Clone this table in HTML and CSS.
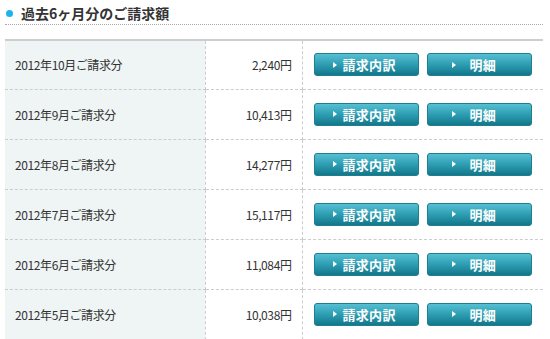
FILE: index.html
```html
<!DOCTYPE html>
<html lang="ja">
<head>
<meta charset="utf-8">
<link rel="stylesheet" href="styles.css">
</head>
<body>
<div class="wrap">
  <h2 class="title"><span class="dot"></span>過去6ヶ月分のご請求額</h2>
  <table class="bills">
    <tr><td class="month">2012年10月ご請求分</td><td class="amount">2,240円</td><td class="actions"><a class="btn"><span class="arr"></span>請求内訳</a><a class="btn btn2"><span class="arr"></span>明細</a></td></tr>
    <tr><td class="month">2012年9月ご請求分</td><td class="amount">10,413円</td><td class="actions"><a class="btn"><span class="arr"></span>請求内訳</a><a class="btn btn2"><span class="arr"></span>明細</a></td></tr>
    <tr><td class="month">2012年8月ご請求分</td><td class="amount">14,277円</td><td class="actions"><a class="btn"><span class="arr"></span>請求内訳</a><a class="btn btn2"><span class="arr"></span>明細</a></td></tr>
    <tr><td class="month">2012年7月ご請求分</td><td class="amount">15,117円</td><td class="actions"><a class="btn"><span class="arr"></span>請求内訳</a><a class="btn btn2"><span class="arr"></span>明細</a></td></tr>
    <tr><td class="month">2012年6月ご請求分</td><td class="amount">11,084円</td><td class="actions"><a class="btn"><span class="arr"></span>請求内訳</a><a class="btn btn2"><span class="arr"></span>明細</a></td></tr>
    <tr><td class="month">2012年5月ご請求分</td><td class="amount">10,038円</td><td class="actions"><a class="btn"><span class="arr"></span>請求内訳</a><a class="btn btn2"><span class="arr"></span>明細</a></td></tr>
  </table>
</div>
</body>
</html>
```
FILE: styles.css
```css
* { box-sizing: border-box; }
body {
  margin: 0;
  background: #fff;
  font-family: "Noto Sans CJK JP", "Noto Sans", sans-serif;
  color: #333;
}
.wrap {
  width: 538px;
  margin-left: 5px;
}
.title {
  margin: 0;
  height: 25px;
  padding: 3px 0 0 1px;
  font-size: 14px;
  line-height: 19px;
  font-weight: bold;
  color: #333;
  border-bottom: 1px dotted #aaa;
  display: flex;
  align-items: center;
}
.dot {
  width: 7px;
  height: 7px;
  border-radius: 50%;
  background: #1bb3ec;
  margin-right: 8px;
}
.bills {
  margin-top: 14px;
  width: 538px;
  border-collapse: collapse;
  border-top: 2px solid #cdcdcd;
}
.bills td {
  height: 50px;
  padding: 0;
  font-size: 12px;
  border-bottom: 1px dashed #ccc;
  vertical-align: middle;
  letter-spacing: -0.4px;
}
.bills tr:first-child td { height: 49px; }
.month {
  width: 200px;
  background: #eff4f4;
  padding-left: 10px !important;
  border-right: 1px dashed #ccc;
}
.amount {
  width: 97px;
  text-align: right;
  padding-right: 10px !important;
  border-right: 1px dashed #ccc;
}
.actions {
  padding-left: 11px !important;
  white-space: nowrap;
}
.btn {
  display: inline-flex;
  align-items: center;
  width: 105px;
  height: 23px;
  border-radius: 3px;
  border: 1px solid #1d7f90;
  background: linear-gradient(#56c0d3, #2d9db2 50%, #13778a);
  color: #fff;
  font-size: 13px;
  font-weight: bold;
  letter-spacing: 0.3px;
  padding-left: 18px;
  vertical-align: middle;
}
.btn2 {
  margin-left: 8px;
  padding-left: 24px;
}
.arr {
  width: 0;
  height: 0;
  border-left: 4px solid #fff;
  border-top: 3px solid transparent;
  border-bottom: 3px solid transparent;
  margin-right: 6px;
}
.btn2 .arr { margin-right: 14px; }
```
